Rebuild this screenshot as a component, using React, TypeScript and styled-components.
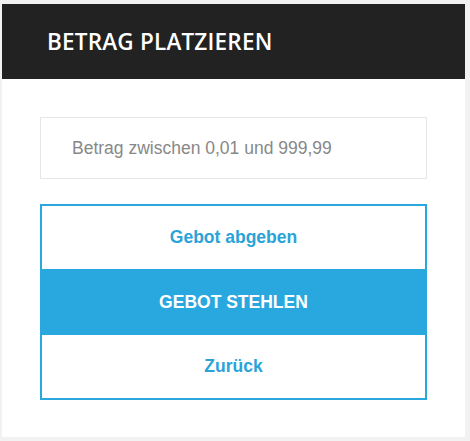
import React from 'react';
import styled, { createGlobalStyle } from 'styled-components';

const GlobalStyle = createGlobalStyle`
  html, body {
    margin: 0;
    padding: 0;
    background: #f2f2f2;
  }
  * {
    box-sizing: border-box;
  }
`;

const Page = styled.div`
  width: 470px;
  height: 441px;
  padding: 4px 5px 4px 2px;
`;

const Card = styled.div`
  background: #fff;
  width: 463px;
  height: 433px;
`;

const Header = styled.div`
  background: #222;
  height: 75px;
  display: flex;
  align-items: center;
  padding-left: 45px;
`;

const Title = styled.h2`
  margin: 0;
  color: #fff;
  font-family: 'Open Sans', sans-serif;
  font-weight: 600;
  font-size: 22.5px;
  letter-spacing: 0.2px;
`;

const Body = styled.div`
  padding: 38px 38px 0 38px;
  display: flex;
  flex-direction: column;
  gap: 25px;
`;

const Input = styled.input`
  height: 62px;
  width: 387px;
  border: 1px solid #e6e6e6;
  padding: 0 0 0 31px;
  font-family: 'Liberation Sans', Arial, sans-serif;
  font-size: 17.5px;
  color: #555;
  outline: none;
  &::placeholder {
    color: #888;
  }
`;

const Group = styled.div`
  width: 387px;
  border: 2px solid #2aa7dd;
  display: flex;
  flex-direction: column;
`;

const Action = styled.button<{ $primary?: boolean }>`
  height: ${(p) => (p.$primary ? '66px' : '63px')};
  border: none;
  margin: 0;
  padding: 0;
  background: ${(p) => (p.$primary ? '#28a8de' : '#fff')};
  color: ${(p) => (p.$primary ? '#fff' : '#2aa3d8')};
  font-family: 'Liberation Sans', Arial, sans-serif;
  font-weight: 700;
  font-size: 17.5px;
  text-transform: ${(p) => (p.$primary ? 'uppercase' : 'none')};
  cursor: pointer;
`;

export default function App() {
  return (
    <>
      <GlobalStyle />
      <Page>
        <Card>
          <Header>
            <Title>BETRAG PLATZIEREN</Title>
          </Header>
          <Body>
            <Input placeholder="Betrag zwischen 0,01 und 999,99" />
            <Group>
              <Action>Gebot abgeben</Action>
              <Action $primary>Gebot stehlen</Action>
              <Action>Zurück</Action>
            </Group>
          </Body>
        </Card>
      </Page>
    </>
  );
}
